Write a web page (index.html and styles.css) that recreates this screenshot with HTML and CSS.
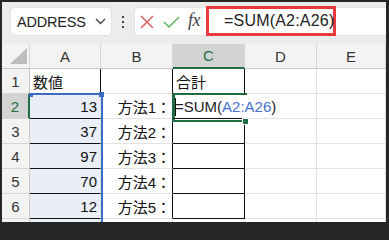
FILE: index.html
```html
<!DOCTYPE html>
<html lang="ja">
<head>
<meta charset="utf-8">
<link rel="stylesheet" href="styles.css">
</head>
<body>
<div class="frame">
  <div class="toolbar">
    <div class="namebox">
      <span class="name">ADDRESS</span>
      <svg class="chev" width="11" height="7" viewBox="0 0 11 7"><path d="M1 1 L5.5 5.5 L10 1" fill="none" stroke="#444" stroke-width="1.4"/></svg>
    </div>
    <div class="dots"><i></i><i></i><i></i></div>
    <div class="fbar">
      <svg class="ico-x" width="14" height="14" viewBox="0 0 14 14"><path d="M1 1 L13 13 M13 1 L1 13" stroke="#e36060" stroke-width="1.5" fill="none"/></svg>
      <svg class="ico-ok" width="17" height="12" viewBox="0 0 17 12"><path d="M1 6 L6 11 L16 1" stroke="#5cb85c" stroke-width="1.5" fill="none"/></svg>
      <span class="fx">fx</span>
      <div class="formula">=SUM(A2:A26)</div>
    </div>
  </div>
  <div class="sheet">
    <div class="c hd corner"><svg width="17" height="16" viewBox="0 0 17 16"><path d="M17 0 L17 16 L0 16 Z" fill="#bdbdbd"/></svg></div>
    <div class="c hd">A</div>
    <div class="c hd">B</div>
    <div class="c hd hsel">C</div>
    <div class="c hd">D</div>
    <div class="c hd">E</div>

    <div class="c rh">1</div>
    <div class="c a1">数値</div>
    <div class="c bb"></div>
    <div class="c cc">合計</div>
    <div class="c"></div>
    <div class="c"></div>

    <div class="c rh rsel">2</div>
    <div class="c ac num">13</div>
    <div class="c bb lab">方法1：</div>
    <div class="c cc edit"><span class="editbox"><span class="caret"></span><span class="f1">=SUM(</span><span class="f2">A2:A26</span><span class="f1">)</span></span></div>
    <div class="c"></div>
    <div class="c"></div>

    <div class="c rh">3</div>
    <div class="c ac num">37</div>
    <div class="c bb lab">方法2：</div>
    <div class="c cc"></div>
    <div class="c"></div>
    <div class="c"></div>

    <div class="c rh">4</div>
    <div class="c ac num">97</div>
    <div class="c bb lab">方法3：</div>
    <div class="c cc"></div>
    <div class="c"></div>
    <div class="c"></div>

    <div class="c rh">5</div>
    <div class="c ac num">70</div>
    <div class="c bb lab">方法4：</div>
    <div class="c cc"></div>
    <div class="c"></div>
    <div class="c"></div>

    <div class="c rh">6</div>
    <div class="c ac num">12</div>
    <div class="c bb lab">方法5：</div>
    <div class="c cc"></div>
    <div class="c"></div>
    <div class="c"></div>

    <div class="c rh"></div>
    <div class="c ac"></div>
    <div class="c"></div>
    <div class="c"></div>
    <div class="c"></div>
    <div class="c"></div>

    <div class="range"></div>
    <div class="handle h1"></div>
    <div class="handle h2"></div>
    <div class="sel"></div>
    <div class="fill"></div>
  </div>
</div>
</body>
</html>
```
FILE: styles.css
```css
html, body {
  margin: 0;
  padding: 0;
  background: #262626;
}
.frame {
  width: 389px;
  height: 225px;
  box-sizing: border-box;
  border-style: solid;
  border-color: #262626;
  border-width: 2px 3px 3px 2px;
  background: #fff;
  overflow: hidden;
  font-family: "Liberation Sans", "Noto Sans CJK JP", sans-serif;
}
.toolbar {
  height: 42px;
  background: #ececec;
  display: flex;
  align-items: flex-start;
  padding: 5px 0 0 8px;
  box-sizing: border-box;
}
.namebox {
  width: 102px;
  height: 29px;
  box-sizing: border-box;
  background: #fff;
  border: 1px solid #e2e2e2;
  border-radius: 5px;
  display: flex;
  align-items: center;
  padding-left: 6px;
  padding-right: 5px;
}
.name {
  flex: 1;
  font-size: 14.5px;
  color: #222;
  letter-spacing: -0.2px;
}
.chev {
  display: block;
}
.dots {
  width: 22px;
  height: 29px;
  display: flex;
  flex-direction: column;
  align-items: center;
  justify-content: center;
  gap: 3px;
}
.dots i {
  display: block;
  width: 2px;
  height: 2px;
  background: #444;
}
.fbar {
  flex: 1;
  height: 29px;
  box-sizing: border-box;
  background: #fff;
  border: 1px solid #e2e2e2;
  border-right: none;
  border-radius: 5px 0 0 5px;
  display: flex;
  align-items: center;
  padding-left: 5px;
}
.ico-x { display: block; margin-right: 9px; }
.ico-ok { display: block; margin-right: 8px; }
.fx {
  font-family: "Liberation Serif", serif;
  font-style: italic;
  font-size: 18px;
  color: #444;
  margin-right: 6px;
  letter-spacing: -0.5px;
  position: relative;
  top: -1px;
}
.formula {
  width: 130px;
  height: 30px;
  box-sizing: border-box;
  border: 3px solid #e8393d;
  margin-top: -4px;
  margin-bottom: -2px;
  display: flex;
  align-items: center;
  padding-left: 15px;
  font-size: 16px;
  letter-spacing: 0.2px;
  color: #222;
  white-space: nowrap;
}
.sheet {
  position: relative;
  display: grid;
  grid-template-columns: 28px 71px 72px 72px 72px 69px;
  grid-auto-rows: 25px;
  font-size: 15px;
  color: #111;
}
.c {
  box-sizing: border-box;
  border-right: 1px solid #e1e1e1;
  border-bottom: 1px solid #e1e1e1;
  display: flex;
  align-items: center;
  padding: 0 2px 0 3px;
  white-space: nowrap;
  overflow: visible;
  font-family: "Liberation Sans", "Noto Sans CJK JP", sans-serif;
}
.hd {
  background: #f3f3f3;
  border-right-color: #d6d6d6;
  border-bottom-color: #c6c6c6;
  justify-content: center;
  color: #333;
  font-size: 15px;
  padding: 0;
}
.corner {
  justify-content: flex-end;
  align-items: flex-end;
  padding: 0 2px 4px 0;
}
.corner svg { display: block; }
.hsel {
  background: #d3d3d3;
  color: #1e6e42;
  border-bottom: 2px solid #1e6e42;
}
.rh {
  background: #f3f3f3;
  border-right-color: #c6c6c6;
  border-bottom-color: #d6d6d6;
  justify-content: center;
  color: #333;
  padding: 0;
}
.rsel {
  background: #d3d3d3;
  color: #1e6e42;
  border-right: 2px solid #1e6e42;
}
.a1 {
  border-right-color: #111;
}
.ac {
  background: #e9eef7;
  border-bottom-color: #111;
}
.num {
  justify-content: flex-end;
  padding-right: 3px;
}
.bb {
  border-right-color: #111;
}
.lab {
  justify-content: flex-end;
  padding-right: 1px;
}
.cc {
  border-right-color: #111;
  border-bottom-color: #111;
}
.edit {
  position: relative;
  z-index: 5;
  padding: 0;
  align-items: flex-start;
}
.editbox {
  display: flex;
  align-items: center;
  margin-top: 1px;
  margin-left: 2px;
  height: 23px;
  padding-right: 4px;
  background: #fff;
}
.caret {
  display: inline-block;
  width: 1px;
  height: 18px;
  background: #111;
  margin-right: -1px;
}
.f1 { color: #222; }
.f2 { color: #4a72d0; }
.range {
  position: absolute;
  left: 28px;
  top: 49px;
  width: 73px;
  height: 140px;
  box-sizing: border-box;
  border-top: 2px solid #3a6cc6;
  border-right: 2px solid #3a6cc6;
}
.handle {
  position: absolute;
  background: #3a6cc6;
}
.h1 { left: 27px; top: 49px; width: 4px; height: 4px; }
.h2 { left: 97px; top: 48px; width: 5px; height: 5px; }
.sel {
  position: absolute;
  left: 170px;
  top: 49px;
  width: 75px;
  height: 29px;
  box-sizing: border-box;
  border: 2px solid #1e6e42;
  border-left-width: 3px;
  z-index: 3;
}
.fill {
  position: absolute;
  left: 241px;
  top: 75px;
  width: 5px;
  height: 5px;
  background: #1e6e42;
  outline: 1px solid #fff;
  z-index: 6;
}
```
